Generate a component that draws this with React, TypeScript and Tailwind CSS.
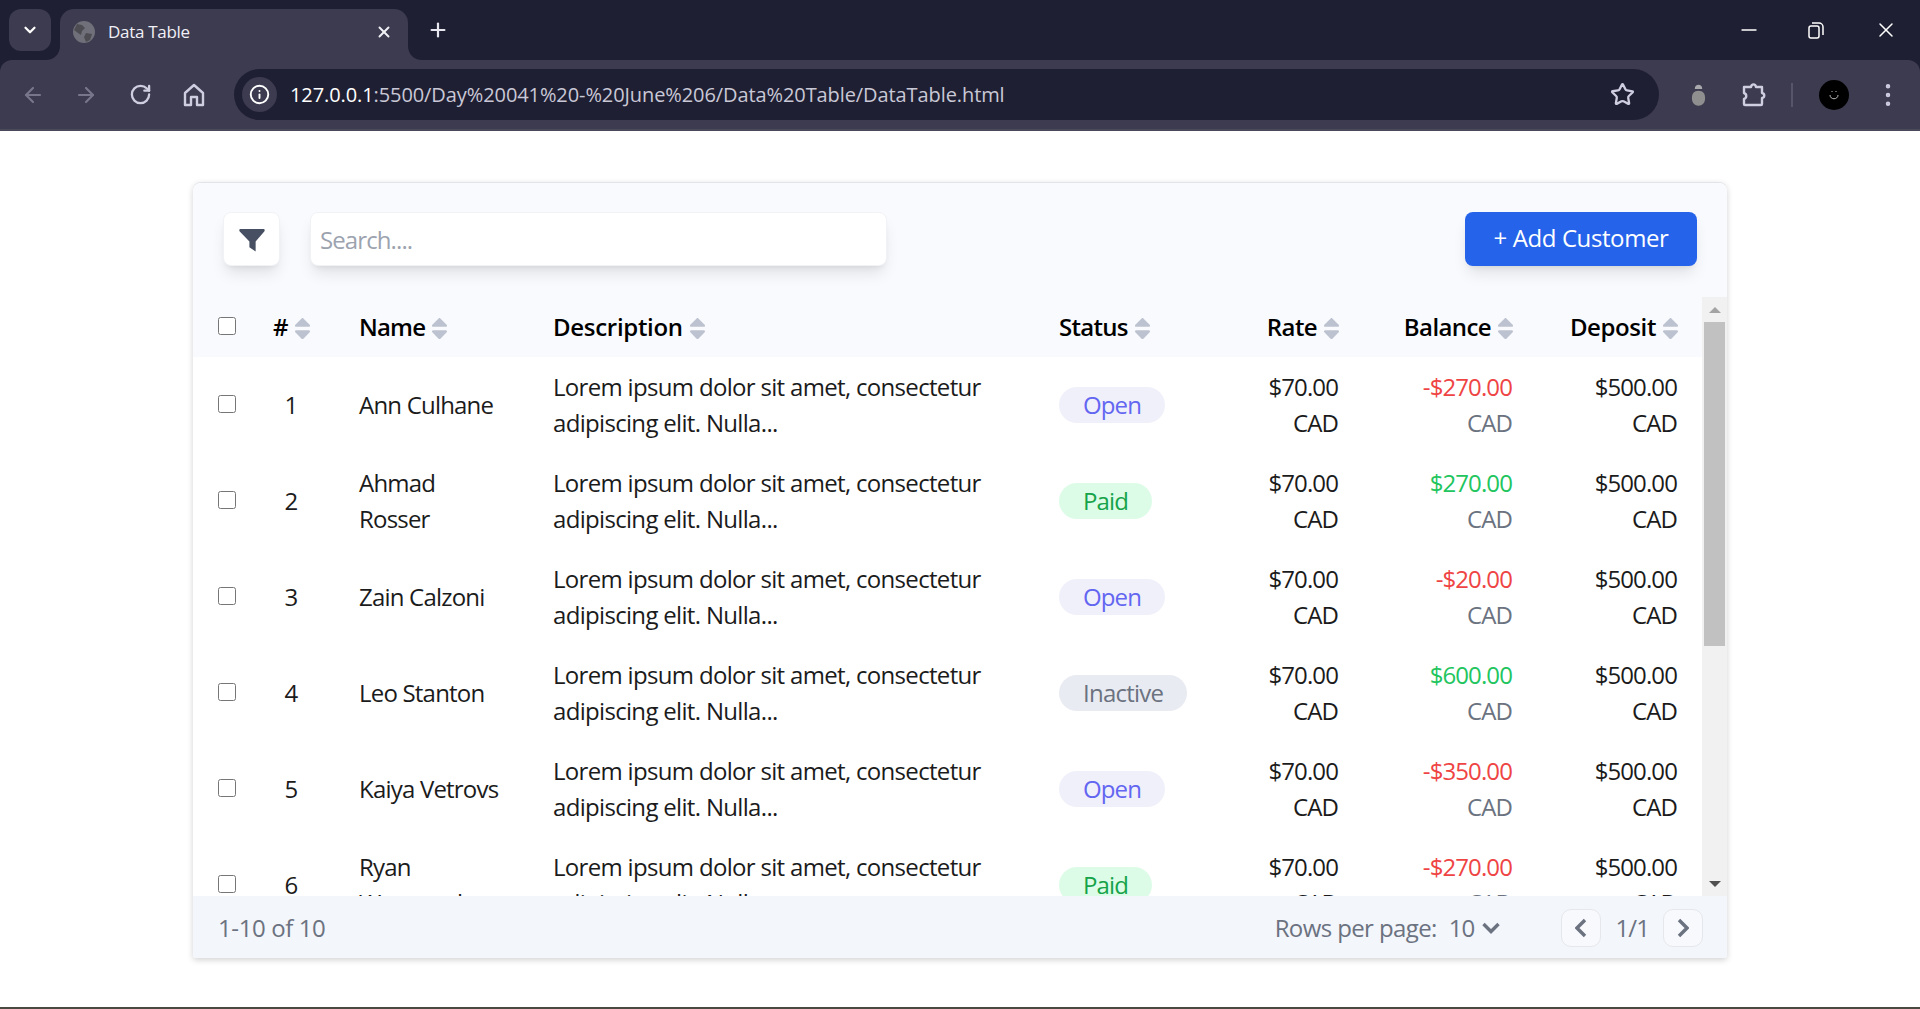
import { ArrowLeft, ArrowRight, RotateCw, ChevronDown, X, Plus, Star, Info, Minus, EllipsisVertical } from "lucide-react";
import { FaSort } from "react-icons/fa";

const rows = [
  { id: 1, name: ["Ann Culhane"], status: "Open", balance: "-$270.00" },
  { id: 2, name: ["Ahmad", "Rosser"], status: "Paid", balance: "$270.00" },
  { id: 3, name: ["Zain Calzoni"], status: "Open", balance: "-$20.00" },
  { id: 4, name: ["Leo Stanton"], status: "Inactive", balance: "$600.00" },
  { id: 5, name: ["Kaiya Vetrovs"], status: "Open", balance: "-$350.00" },
  { id: 6, name: ["Ryan", "Westervelt"], status: "Paid", balance: "-$270.00" },
];

const pill: Record<string, string> = {
  Open: "bg-[#f0f0fb] text-[#6366f1]",
  Paid: "bg-[#dcfce7] text-[#16a34a]",
  Inactive: "bg-[#e9ebf2] text-[#6b7280] tracking-[-0.75px]",
};

function SortIcon() {
  return <FaSort className="inline-block text-[#bcc2cf] w-[17px] h-[27px] ml-[6px] align-[-6px]" />;
}

function Th({ children, className }: { children: React.ReactNode; className: string }) {
  return (
    <th className={"font-semibold text-black whitespace-nowrap " + className}>
      {children}
      <SortIcon />
    </th>
  );
}

function Funnel() {
  return (
    <svg width="26" height="23" viewBox="0 0 25 22" fill="#475063" className="mt-[2px]">
      <path d="M1.5 0h22c1 0 1.5 1 1 2L16 12v9.5L10 17.5V12L.5 2C0 1 .5 0 1.5 0z" />
    </svg>
  );
}

function Puzzle() {
  return (
    <svg width="26" height="25" viewBox="0 0 26 25" fill="none" stroke="#cfcde0" strokeWidth="2.4" strokeLinejoin="round">
      <path d="M3 5h7c.5-3.5 4.5-3.5 5 0h6v6c3 .5 3 4.5 0 5v6a1 1 0 0 1-1 1H4a1 1 0 0 1-1-1v-5c3-1 3-5 0-6z" />
    </svg>
  );
}

function Bug() {
  return (
    <svg width="15" height="23" viewBox="0 0 16 24">
      <path d="M4 6c0-6 8-6 8 0z" fill="#a9a9ad" />
      <path d="M8 8c5 0 7 3 7 8s-3 8-7 8-7-3-7-8 2-8 7-8z" fill="#8f8f8f" />
    </svg>
  );
}

function Globe() {
  return (
    <svg width="22" height="22" viewBox="0 0 22 22">
      <circle cx="11" cy="11" r="11" fill="#70707a" />
      <path d="M4 3l5 1 3 3-3 3-1 4-3-2-4-3zM13 12l6 1-2 6-4 2-2-5z" fill="#4c4c52" />
    </svg>
  );
}

function Restore() {
  return (
    <svg width="16" height="18" viewBox="0 0 16 18" fill="none" stroke="#fff" strokeWidth="1.5">
      <rect x="1" y="5" width="10" height="12" rx="2" />
      <path d="M4 2h7a4 4 0 0 1 4 4v8" />
    </svg>
  );
}

function Avatar() {
  return (
    <div className="w-[30px] h-[30px] rounded-full bg-black flex items-center justify-center">
      <svg width="12" height="12" viewBox="0 0 12 12" fill="none" stroke="#bbb" strokeWidth="1">
        <path d="M2 6c0 5 8 5 8 0M4 2v1M8 2v1" />
      </svg>
    </div>
  );
}

function Home() {
  return (
    <svg width="22" height="24" viewBox="0 0 22 24" fill="none" stroke="#cfcde0" strokeWidth="2.4" strokeLinejoin="round">
      <path d="M2 10l9-8 9 8v12h-6v-8H8v8H2z" />
    </svg>
  );
}

function TabCorner({ flip }: { flip?: boolean }) {
  return (
    <svg width="14" height="14" viewBox="0 0 14 14" className={flip ? "absolute bottom-0 -right-[14px]" : "absolute bottom-0 -left-[14px]"}>
      <path d={flip ? "M0 0c0 8 6 14 14 14H0z" : "M14 0c0 8-6 14-14 14h14z"} fill="#3c3b4f" />
    </svg>
  );
}

function Chevron({ d, w, h }: { d: string; w: number; h: number }) {
  return (
    <svg width={w} height={h} viewBox={`0 0 ${w} ${h}`} fill="none" stroke="#6b7280" strokeWidth="3.4" strokeLinejoin="miter">
      <path d={d} />
    </svg>
  );
}

export default function App() {
  return (
    <div className="w-[1920px] h-[1009px] overflow-hidden flex flex-col bg-white font-['Open_Sans',sans-serif]">
      <div className="bg-[#1f1f33] shrink-0">
        {/* browser tab strip */}
        <div className="h-[60px] flex items-end pl-[9px]">
          <div className="w-[42px] h-[42px] mb-[9px] rounded-[12px] bg-[#3c3b4f] flex items-center justify-center text-white">
            <ChevronDown size={18} strokeWidth={3} />
          </div>
          <div className="relative ml-[9px] w-[348px] h-[51px] bg-[#3c3b4f] rounded-t-[14px] flex items-center pl-[13px] pr-[15px] pb-[5px] text-[#f1f0f7]">
            <TabCorner />
            <TabCorner flip />
            <Globe />
            <span className="ml-[13px] text-[17px] tracking-[-0.3px] flex-1">Data Table</span>
            <X size={18} strokeWidth={2.6} />
          </div>
          <Plus size={22} strokeWidth={2.4} className="ml-[19px] mb-[19px] text-[#e8e7f0]" />
          <div className="ml-auto flex items-center text-white mb-[18px]">
            <Minus size={24} strokeWidth={1.4} />
            <div className="ml-[47px]"><Restore /></div>
            <X size={24} strokeWidth={1.5} className="ml-[50px] mr-[22px]" />
          </div>
        </div>
        {/* browser toolbar */}
        <div className="h-[71px] bg-[#3c3b4f] border-b-2 border-[#4b4a5a] rounded-t-[12px] flex items-center pl-[21px]">
          <ArrowLeft size={24} strokeWidth={2.2} className="text-[#77768a]" />
          <ArrowRight size={24} strokeWidth={2.2} className="ml-[29px] text-[#77768a]" />
          <RotateCw size={23} strokeWidth={2.4} className="ml-[31px] text-[#cfcde0]" />
          <div className="ml-[31px]"><Home /></div>
          <div className="ml-[29px] w-[1425px] h-[51px] rounded-full bg-[#1f1f33] flex items-center pl-[8px] pr-[24px]">
            <div className="w-[35px] h-[35px] rounded-full bg-[#3c3b4f] flex items-center justify-center text-white">
              <Info size={21} strokeWidth={2.2} />
            </div>
            <span className="ml-[13px] flex-1 text-[20px] tracking-[-0.09px] text-[#c9c8d6] whitespace-nowrap">
              <span className="text-white">127.0.0.1</span>:5500/Day%20041%20-%20June%206/Data%20Table/DataTable.html
            </span>
            <Star size={25} strokeWidth={2.2} className="text-[#cfcde0]" />
          </div>
          <div className="ml-[32px]"><Bug /></div>
          <div className="ml-[35px]"><Puzzle /></div>
          <div className="ml-[24px] w-[2px] h-[24px] bg-[#56556a]" />
          <div className="ml-[26px]"><Avatar /></div>
          <EllipsisVertical size={30} strokeWidth={1.6} className="ml-[24px] text-[#cfcde0]" />
        </div>
      </div>

      {/* page */}
      <div className="flex-1 bg-white pt-[51px] pl-[193px]">
        <div className="w-[1534px] h-[776px] rounded-t-lg rounded-b-[3px] overflow-hidden bg-white border-t border-[#e2e4ea] shadow-[0_2px_6px_rgba(0,0,0,0.18)] flex flex-col text-[24px] leading-[36px]">
          <div className="h-[114px] shrink-0 bg-[#f9fafd] flex items-center pl-[30px] pr-[30px] pb-[2px]">
            <button className="w-[57px] h-[54px] rounded-lg bg-white shadow-lg flex items-center justify-center border border-[#f1f2f5]">
              <Funnel />
            </button>
            <input
              placeholder="Search...."
              className="ml-[30px] w-[577px] h-[54px] rounded-lg bg-white shadow-lg pl-[9px] outline-none tracking-[-0.9px] border border-[#f1f2f5] placeholder:text-[#9ca3af]"
            />
            <button className="ml-auto w-[232px] h-[54px] pb-[2px] rounded-lg bg-[#2563eb] text-white shadow-lg tracking-[-0.4px]">
              + Add Customer
            </button>
          </div>

          <div className="flex h-[599px] shrink-0">
            <div className="flex-1 overflow-hidden">
              <table className="w-[1509px] table-fixed border-collapse tracking-[-0.9px]">
                <colgroup>
                  <col className="w-[61px]" />
                  <col className="w-[91px]" />
                  <col className="w-[194px]" />
                  <col className="w-[506px]" />
                  <col className="w-[200px]" />
                  <col className="w-[107px]" />
                  <col className="w-[174px]" />
                  <col className="w-[176px]" />
                </colgroup>
                <thead>
                  <tr className="h-[60px] bg-[#f9fafd]">
                    <th className="pl-[25px] text-left"><input type="checkbox" className="w-[18px] h-[18px] block mb-[2px]" /></th>
                    <Th className="text-left pl-[19px]">#</Th>
                    <Th className="text-left pl-[14px] tracking-[-0.8px]">Name</Th>
                    <Th className="text-left pl-[14px] tracking-[-0.3px]">Description</Th>
                    <Th className="text-left pl-[14px] tracking-[-0.7px]">Status</Th>
                    <Th className="text-right pr-[12px] tracking-[-0.6px]">Rate</Th>
                    <Th className="text-right pr-[12px] tracking-[-0.6px]">Balance</Th>
                    <Th className="text-right pr-[23px] tracking-[-0.4px]">Deposit</Th>
                  </tr>
                </thead>
                <tbody>
                  {rows.map((r) => (
                    <tr key={r.id} className="h-[96px] text-[#1b1b1b]">
                      <td className="pl-[25px]"><input type="checkbox" className="w-[18px] h-[18px] block mb-[2px]" /></td>
                      <td className="text-center pr-[17px]">{r.id}</td>
                      <td className="pl-[14px] tracking-[-0.8px]">
                        {r.name.map((n) => (
                          <span key={n} className="block whitespace-nowrap">{n}</span>
                        ))}
                      </td>
                      <td className="pl-[14px] tracking-[-0.68px]">
                        <span className="block whitespace-nowrap">Lorem ipsum dolor sit amet, consectetur</span>
                        <span className="block whitespace-nowrap">adipiscing elit. Nulla...</span>
                      </td>
                      <td className="pl-[14px]">
                        <span className={"inline-block h-[36px] px-[24px] rounded-full " + pill[r.status]}>{r.status}</span>
                      </td>
                      <td className="text-right pr-[14px]">
                        <span className="block">$70.00</span>
                        <span className="block">CAD</span>
                      </td>
                      <td className="text-right pr-[14px]">
                        <span className={"block " + (r.balance.startsWith("-") ? "text-[#ef4444]" : "text-[#22c55e]")}>{r.balance}</span>
                        <span className="block text-[#6b7280]">CAD</span>
                      </td>
                      <td className="text-right pr-[25px]">
                        <span className="block">$500.00</span>
                        <span className="block">CAD</span>
                      </td>
                    </tr>
                  ))}
                </tbody>
              </table>
            </div>
            {/* scrollbar */}
            <div className="w-[25px] shrink-0 bg-[#f1f1f1] flex flex-col items-center">
              <div className="h-[25px] flex items-center justify-center">
                <div className="w-0 h-0 border-x-[6px] border-x-transparent border-b-[6px] border-b-[#a3a3a3]" />
              </div>
              <div className="w-[21px] h-[324px] bg-[#c1c1c1]" />
              <div className="flex-1" />
              <div className="h-[25px] flex items-center justify-center">
                <div className="w-0 h-0 border-x-[6px] border-x-transparent border-t-[6px] border-t-[#505050]" />
              </div>
            </div>
          </div>

          <div className="flex-1 bg-[#f3f6fb] flex items-center pl-[25px] pr-[24px] pt-[1px] text-[#6b7280] tracking-[-0.4px]">
            <span>1-10 of 10</span>
            <span className="ml-auto tracking-[-0.6px]">Rows per page:</span>
            <span className="ml-[12px] tracking-[-0.9px]">10</span>
            <span className="ml-[8px]"><Chevron w={18} h={12} d="M1.5 2 L9 9.5 L16.5 2" /></span>
            <button className="ml-[61px] w-[40px] h-[38px] rounded-[10px] bg-[#f7f9fc] border border-[#e5e7eb] flex items-center justify-center">
              <Chevron w={12} h={20} d="M10 2 L2 10 L10 18" />
            </button>
            <span className="mx-[14px] tracking-[-0.9px]">1/1</span>
            <button className="w-[40px] h-[38px] rounded-[10px] bg-[#f7f9fc] border border-[#e5e7eb] flex items-center justify-center">
              <Chevron w={12} h={20} d="M2 2 L10 10 L2 18" />
            </button>
          </div>
        </div>
      </div>
      <div className="h-[2px] shrink-0 bg-[#4a4a40]" />
    </div>
  );
}
